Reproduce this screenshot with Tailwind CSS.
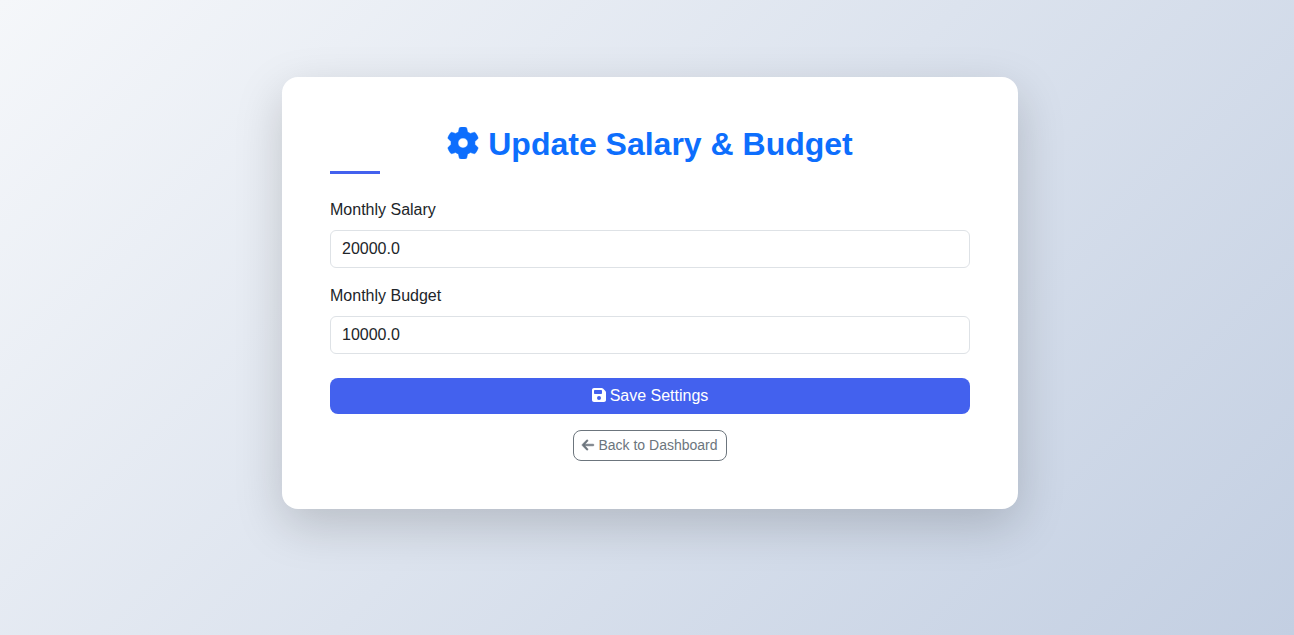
<!DOCTYPE html>
<html lang="en">
<head>
<meta charset="utf-8">
<title>Update Salary &amp; Budget</title>
<script src="https://cdn.jsdelivr.net/npm/@tailwindcss/browser@4"></script>
</head>
<body class="min-h-screen bg-[linear-gradient(135deg,#f5f7fa_0%,#c3cfe2_100%)] pt-[77px] pr-4 pb-12 pl-[22px] font-['Liberation_Sans',Arial,sans-serif] text-base leading-6 text-[#212529]">
<main class="mx-auto w-full max-w-[736px] rounded-2xl bg-white p-12 shadow-[0_16px_48px_rgba(0,0,0,0.175)]">
  <h1 class="flex items-start justify-center gap-[9px] text-[32px] leading-[38px] font-bold text-[#0d6efd]">
    <svg class="mt-0.5 size-8" viewBox="0 0 512 512" fill="currentColor" stroke="currentColor" stroke-width="8" aria-hidden="true"><path d="M495.900 166.600c3.200 8.700.5 18.400-6.400 24.600l-43.300 39.400c1.100 8.300 1.700 16.800 1.700 25.400s-.6 17.100-1.700 25.400l43.300 39.400c6.900 6.200 9.600 15.900 6.400 24.600-4.400 11.900-9.700 23.300-15.800 34.300l-4.700 8.100c-6.600 11-14 21.400-22.100 31.200-5.900 7.200-15.700 9.600-24.500 6.800l-55.700-17.700c-13.400 10.300-28.200 18.900-44 25.400l-12.500 57.100c-2 9.100-9 16.300-18.200 17.800-13.800 2.300-28 3.500-42.500 3.500s-28.700-1.200-42.500-3.500c-9.200-1.500-16.200-8.700-18.200-17.800l-12.500-57.100c-15.800-6.500-30.600-15.100-44-25.400l-55.600 17.800c-8.800 2.800-18.600.3-24.500-6.800-8.100-9.800-15.500-20.200-22.100-31.200l-4.700-8.100c-6.100-11-11.400-22.400-15.800-34.300-3.200-8.700-.5-18.400 6.400-24.600l43.300-39.400c-1.100-8.400-1.700-16.900-1.700-25.500s.6-17.100 1.700-25.400l-43.300-39.400c-6.900-6.200-9.600-15.900-6.400-24.600 4.400-11.900 9.700-23.300 15.800-34.300l4.700-8.100c6.600-11 14-21.400 22.100-31.200 5.900-7.200 15.700-9.600 24.500-6.800l55.700 17.700c13.400-10.300 28.200-18.900 44-25.400l12.500-57.100c2-9.100 9-16.300 18.200-17.800C227.300 1.200 241.500 0 256 0s28.700 1.200 42.500 3.500c9.200 1.500 16.200 8.700 18.200 17.800l12.500 57.100c15.800 6.500 30.600 15.100 44 25.400l55.700-17.700c8.800-2.800 18.600-.3 24.500 6.800 8.100 9.800 15.500 20.200 22.100 31.200l4.700 8.100c6.100 11 11.400 22.400 15.700 34.400zM256 336a80 80 0 1 0 0-160 80 80 0 1 0 0 160z"/></svg>
    <span>Update Salary &amp; Budget</span>
  </h1>
  <div class="mt-2 h-[3px] w-[50px] bg-[#4361ee]"></div>
  <form class="mt-6">
    <label for="salary" class="mb-2 block">Monthly Salary</label>
    <input id="salary" type="text" inputmode="decimal" value="20000.0" class="block h-[38px] w-full rounded-md border border-[#dee2e6] bg-white px-[11px]">
    <label for="budget" class="mt-4 mb-2 block">Monthly Budget</label>
    <input id="budget" type="text" inputmode="decimal" value="10000.0" class="block h-[38px] w-full rounded-md border border-[#dee2e6] bg-white px-[11px]">
    <button type="submit" class="mt-6 flex h-9 w-full items-start justify-center gap-1 rounded-lg bg-[#4361ee] pt-1.5 text-white">
      <svg class="mt-[3px] h-4 w-[14px]" viewBox="0 0 448 512" fill="currentColor" aria-hidden="true"><path d="M64 32C28.700 32 0 60.700 0 96v320c0 35.300 28.700 64 64 64h320c35.300 0 64-28.700 64-64V173.300c0-17-6.700-33.300-18.700-45.300L352 50.700C340 38.700 323.700 32 306.700 32H64zm0 96c0-17.700 14.300-32 32-32h192c17.700 0 32 14.300 32 32v64c0 17.700-14.300 32-32 32H96c-17.700 0-32-14.300-32-32v-64zm160 160a64 64 0 1 1 0 128 64 64 0 1 1 0-128z"/></svg>
      Save Settings
    </button>
  </form>
  <div class="mt-4 flex justify-center">
    <a href="#" class="flex h-[31px] items-start gap-1 rounded-lg border border-[#6c757d] px-2 pt-1 text-sm text-[#6c757d]">
      <svg class="mt-[3px] h-[14px] w-3 overflow-visible" viewBox="0 0 448 512" fill="currentColor" stroke="currentColor" stroke-width="20" aria-hidden="true"><path d="M9.400 233.400c-12.500 12.500-12.500 32.800 0 45.300l160 160c12.500 12.500 32.800 12.500 45.300 0s12.500-32.800 0-45.300L109.200 288H416c17.700 0 32-14.300 32-32s-14.300-32-32-32H109.300l105.400-105.400c12.500-12.500 12.500-32.800 0-45.300s-32.800-12.500-45.300 0l-160 160z"/></svg>
      Back to Dashboard
    </a>
  </div>
</main>
</body>
</html>
